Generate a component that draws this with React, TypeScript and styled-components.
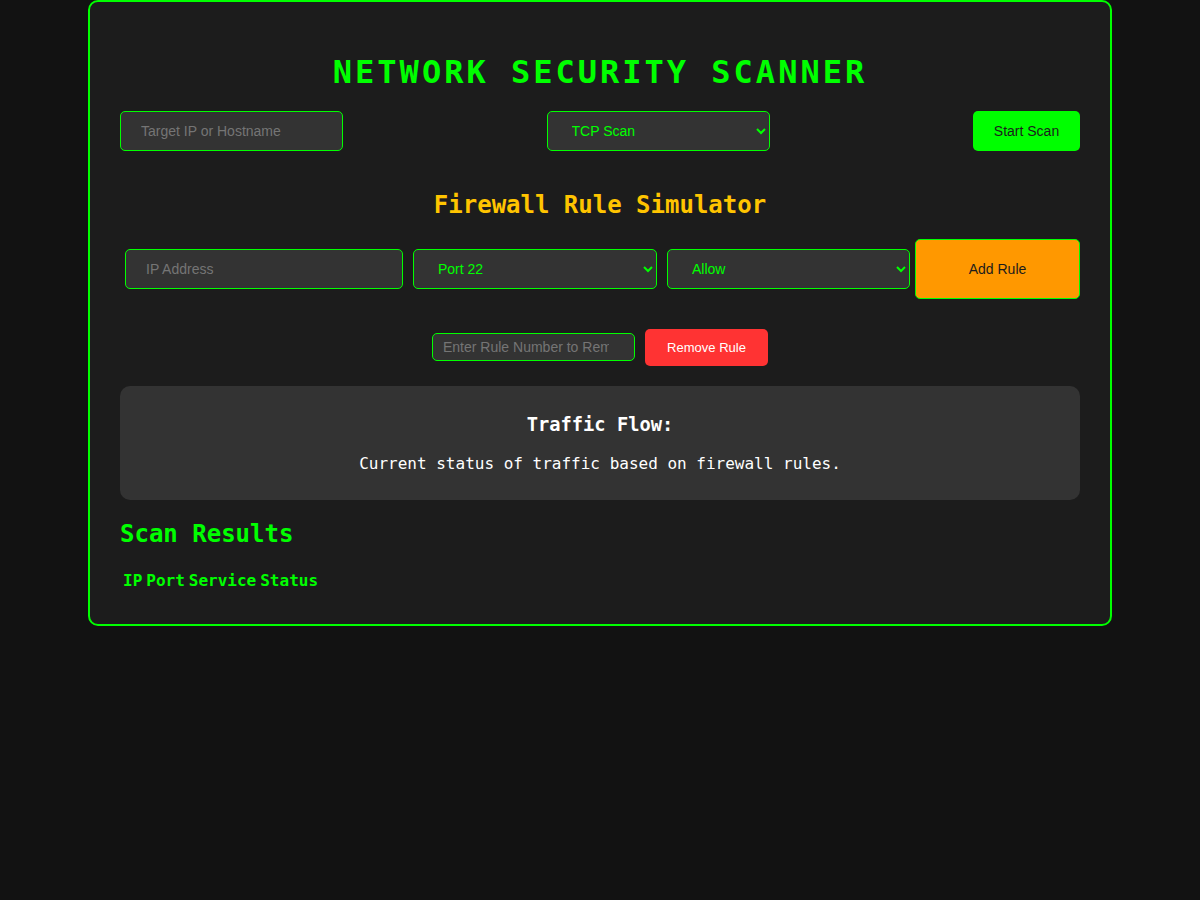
import React from "react";
import styled, { createGlobalStyle } from "styled-components";

const Global = createGlobalStyle`
  html, body {
    margin: 0;
    padding: 0;
    background: #121212;
    font-family: "DejaVu Sans Mono", monospace;
    color: #e0e0e0;
  }
`;

const Container = styled.div`
  width: 960px;
  margin: 0 auto;
  padding: 30px 30px 31px;
  background: #1c1c1c;
  border: 2px solid #00ff00;
  border-radius: 10px;
`;

const Title = styled.h1`
  margin: 21.44px 0 19.44px;
  font-size: 32px;
  font-weight: bold;
  letter-spacing: 3px;
  text-align: center;
  color: #00ff00;
`;

const Heading = styled.h2<{ $color: string; $align?: string }>`
  margin: 19.92px 0;
  font-size: 24px;
  font-weight: bold;
  color: ${(p) => p.$color};
  text-align: ${(p) => p.$align || "left"};
`;

const Section = styled.section`
  display: flow-root;
  margin-top: 20px;
`;

const ScanRow = styled.div`
  display: flex;
  justify-content: space-between;
  align-items: center;
`;

const RuleRow = styled.div`
  display: flex;
  align-items: center;
`;

const RemoveRow = styled.div`
  display: flex;
  justify-content: center;
  align-items: center;
  gap: 10px;
  margin-top: 30px;
`;

const fieldBase = `
  box-sizing: border-box;
  height: 40px;
  padding: 0 20px;
  background: #333333;
  border: 1px solid #00ff00;
  border-radius: 5px;
  color: #00ff00;
  font-family: "Liberation Sans", Arial, sans-serif;
  font-size: 14px;
  outline: none;
  &::placeholder { color: #757575; }
`;

const TextInput = styled.input<{ $w: number; $m?: number }>`
  ${fieldBase}
  width: ${(p) => p.$w}px;
  margin: ${(p) => p.$m || 0}px;
`;

const Select = styled.select<{ $w: number; $m?: number }>`
  ${fieldBase}
  width: ${(p) => p.$w}px;
  margin: ${(p) => p.$m || 0}px;
`;

const SmallInput = styled.input`
  box-sizing: border-box;
  width: 203px;
  height: 28px;
  padding: 0 10px;
  background: #333333;
  border: 1px solid #00ff00;
  border-radius: 5px;
  color: #00ff00;
  font-family: "Liberation Sans", Arial, sans-serif;
  font-size: 14px;
  outline: none;
  &::placeholder { color: #757575; }
`;

const Button = styled.button<{ $bg: string; $fg: string; $w: number; $h: number; $fs: number; $border?: boolean }>`
  box-sizing: border-box;
  width: ${(p) => p.$w}px;
  height: ${(p) => p.$h}px;
  background: ${(p) => p.$bg};
  color: ${(p) => p.$fg};
  border: ${(p) => (p.$border ? "1px solid #00ff00" : "none")};
  border-radius: 5px;
  font-family: "Liberation Sans", Arial, sans-serif;
  font-size: ${(p) => p.$fs}px;
  cursor: pointer;
  padding: 0;
`;

const TrafficBox = styled.div`
  margin-top: 20px;
  padding: 10px 10px 11px;
  background: #333333;
  border-radius: 10px;
  text-align: center;
`;

const TrafficTitle = styled.h3`
  margin: 18.72px 0;
  font-size: 18.72px;
  font-weight: bold;
  color: #ffffff;
`;

const TrafficText = styled.p`
  margin: 16px 0;
  font-size: 16px;
  color: #ffffff;
`;

const Table = styled.table`
  color: #00ff00;
  font-size: 16px;
`;

const Th = styled.th`
  font-weight: bold;
  padding: 1px;
`;

export default function App() {
  return (
    <>
      <Global />
      <Container>
        <Title>NETWORK SECURITY SCANNER</Title>
        <ScanRow>
          <TextInput $w={223} placeholder="Target IP or Hostname" />
          <Select $w={223} defaultValue="tcp">
            <option value="tcp">TCP Scan</option>
            <option value="udp">UDP Scan</option>
          </Select>
          <Button $bg="#00ff00" $fg="#1c1c1c" $w={107} $h={40} $fs={14}>
            Start Scan
          </Button>
        </ScanRow>

        <Section>
          <Heading $color="#ffc400" $align="center">Firewall Rule Simulator</Heading>
          <RuleRow>
            <TextInput $w={278} $m={5} placeholder="IP Address" />
            <Select $w={244} $m={5} defaultValue="22">
              <option value="22">Port 22</option>
              <option value="80">Port 80</option>
              <option value="443">Port 443</option>
            </Select>
            <Select $w={243} $m={5} defaultValue="allow">
              <option value="allow">Allow</option>
              <option value="deny">Deny</option>
            </Select>
            <Button $bg="#ff9800" $fg="#1c1c1c" $w={165} $h={60} $fs={14} $border>
              Add Rule
            </Button>
          </RuleRow>

          <RemoveRow>
            <SmallInput type="number" placeholder="Enter Rule Number to Remove" />
            <Button $bg="#ff3333" $fg="#ffffff" $w={123} $h={37} $fs={13}>
              Remove Rule
            </Button>
          </RemoveRow>
        </Section>

        <TrafficBox>
          <TrafficTitle>Traffic Flow:</TrafficTitle>
          <TrafficText>Current status of traffic based on firewall rules.</TrafficText>
        </TrafficBox>

        <Heading $color="#00ff00">Scan Results</Heading>
        <Table>
          <thead>
            <tr>
              <Th>IP</Th>
              <Th>Port</Th>
              <Th>Service</Th>
              <Th>Status</Th>
            </tr>
          </thead>
        </Table>
      </Container>
    </>
  );
}
